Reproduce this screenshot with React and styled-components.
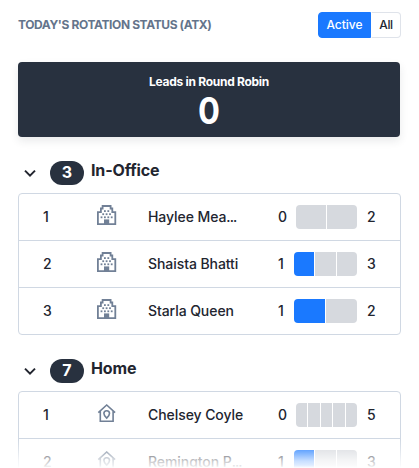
import React from 'react';
import styled, { createGlobalStyle } from 'styled-components';

const Global = createGlobalStyle`
  * { box-sizing: border-box; }
  body { margin: 0; background: #fff; font-family: Inter, sans-serif; color: #22252f; overflow: hidden; }
`;
const Panel = styled.main`
  position: relative;
  height: 468px;
  overflow: hidden;
  padding: 12px 18px 0 18px;
  background: #fff;
`;
const Header = styled.header`
  display: flex;
  justify-content: space-between;
  height: 26px;
  width: 383px;
`;
const Title = styled.h1`
  margin: 0;
  font-size: 12px;
  line-height: 26px;
  font-weight: 700;
  letter-spacing: -0.39px;
  color: #64748b;
  white-space: nowrap;
`;
const Toggle = styled.div`
  display: flex;
  width: 83px;
`;
const ToggleButton = styled.button`
  flex: none;
  width: ${(p) => (p.$active ? 53 : 30)}px;
  height: 26px;
  padding: 0;
  font: 500 12px/24px Inter, sans-serif;
  letter-spacing: ${(p) => (p.$active ? 0 : -0.3)}px;
  color: ${(p) => (p.$active ? '#fff' : '#22252f')};
  background: ${(p) => (p.$active ? '#1a79ff' : '#fff')};
  border: 1px solid ${(p) => (p.$active ? '#1a79ff' : '#dfe3ea')};
  border-left-color: ${(p) => (p.$active ? '#1a79ff' : '#fff')};
  border-radius: ${(p) => (p.$active ? '4px 0 0 4px' : '0 4px 4px 0')};
`;
const Summary = styled.section`
  width: 382px;
  height: 75px;
  margin-top: 24px;
  padding-top: 12px;
  border-radius: 4px;
  background: #28313f;
  color: #fff;
  text-align: center;
  box-shadow: 0 4px 9px rgba(40, 49, 63, 0.1);
`;
const SummaryLabel = styled.div`
  font-size: 12px;
  line-height: 16px;
  font-weight: 700;
  letter-spacing: -0.28px;
`;
const SummaryValue = styled.div`
  font-size: 37px;
  line-height: 42px;
  font-weight: 700;
  transform: scaleX(0.88);
`;
const GroupHeader = styled.div`
  display: flex;
  align-items: flex-start;
  height: 56px;
  padding: 24px 0 0 5px;
`;
const Chevron = styled.svg`
  width: 14px;
  height: 14px;
  margin: 5px 13px 0 0;
`;
const Count = styled.span`
  width: 34px;
  height: 24px;
  margin-right: 7px;
  border-radius: 12px;
  background: #28313f;
  color: #fff;
  font-size: 16px;
  line-height: 23px;
  font-weight: 700;
  text-align: center;
`;
const GroupName = styled.h2`
  margin: 0;
  font-size: 16px;
  line-height: 18px;
  font-weight: 650;
  letter-spacing: -0.16px;
`;
const Table = styled.div`
  width: 383px;
  border: 1px solid #d0d8e3;
  border-radius: 4px;
`;
const Row = styled.div`
  display: grid;
  grid-template-columns: 54px 51px 130px 16px 63px 1fr;
  align-items: center;
  height: 47px;
  padding-left: 24px;
  border-bottom: 1px solid #d0d8e3;
  font-size: 14px;
  font-weight: 500;
  letter-spacing: -0.07px;
  white-space: nowrap;

  &:last-child {
    height: 46px;
    border-bottom: 0;
  }
`;
const Cell = styled.span`
  line-height: 10px;
`;
const Dots = styled.span`
  letter-spacing: -0.9px;
`;
const Limit = styled(Cell)`
  padding-left: 10px;
`;
const RowIcon = styled.svg`
  display: block;
  width: 20px;
  height: 20px;
  margin-top: -4px;
`;
const Meter = styled.div`
  display: flex;
  justify-self: end;
  gap: 1.3px;
  width: ${(p) => (p.$narrow ? 61 : 63)}px;
  height: 24px;
  border-radius: 4px;
  overflow: hidden;
`;
const Segment = styled.i`
  flex: 1;
  background: ${(p) => (p.$filled ? '#1a79ff' : '#d6d9de')};
`;
const Fade = styled.div`
  position: absolute;
  inset: auto 0 0 0;
  height: 28px;
  background: linear-gradient(
    rgba(255, 255, 255, 0),
    rgba(255, 255, 255, 0.32) 36%,
    rgba(255, 255, 255, 0.76) 75%,
    rgba(255, 255, 255, 0.86) 90%,
    #fff
  );
`;

const windows = [
  [7.300, 5.200], [10.700, 5.200],
  [5.600, 8.300], [9, 8.300], [12.400, 8.300],
  [3.900, 11.400], [7.300, 11.400], [10.700, 11.400], [14.100, 11.400],
];

const OfficeIcon = () => (
  <RowIcon viewBox="0 0 20 20" fill="#718096">
    <path
      fill="none"
      stroke="#718096"
      strokeWidth="1.8"
      d="M.9 19.100V7.200h3V3.500h1.700V1h8v2.500h1.700v3.700h3v11.900z"
    />
    <path d="M7 14.400h5.200V19H7z" />
    {windows.map(([x, y]) => (
      <rect key={`${x}-${y}`} x={x - 0.3} y={y} width="1.800" height="1.800" />
    ))}
  </RowIcon>
);
const HomeIcon = () => (
  <RowIcon viewBox="0 0 20 20" fill="none" stroke="#718096" strokeWidth="1.6">
    <path d="M1.300 9.600 9.700 2l8.400 7.600M3.300 8.200v10h12.800v-10" />
    <path d="M9.700 15.200c-1.600-1.500-2.800-3.100-2.800-4.600a2.800 2.800 0 0 1 5.600 0c0 1.500-1.200 3.100-2.800 4.600z" />
  </RowIcon>
);

const groups = [
  {
    name: 'In-Office', count: 3, Icon: OfficeIcon,
    people: [
      { name: 'Haylee Mea', cut: true, done: 0, limit: 2 },
      { name: 'Shaista Bhatti', done: 1, limit: 3 },
      { name: 'Starla Queen', done: 1, limit: 2 },
    ],
  },
  {
    name: 'Home', count: 7, Icon: HomeIcon,
    people: [
      { name: 'Chelsey Coyle', done: 0, limit: 5 },
      { name: 'Remington P', cut: true, done: 1, limit: 3 },
    ],
  },
];

function Group({ name, count, Icon, people }) {
  return (
    <section>
      <GroupHeader>
        <Chevron viewBox="0 0 14 14" fill="none" stroke="#22252f" strokeWidth="2">
          <path d="m2 4.600 5 5 5-5" />
        </Chevron>
        <Count>{count}</Count>
        <GroupName>{name}</GroupName>
      </GroupHeader>
      <Table>
        {people.map((person, i) => (
          <Row key={person.name}>
            <Cell>{i + 1}</Cell>
            <Icon />
            <Cell>{person.name}{person.cut && <Dots>...</Dots>}</Cell>
            <Cell>{person.done}</Cell>
            <Meter $narrow={person.done === 0}>
              {Array.from({ length: person.limit }, (_, n) => (
                <Segment key={n} $filled={n < person.done} />
              ))}
            </Meter>
            <Limit>{person.limit}</Limit>
          </Row>
        ))}
      </Table>
    </section>
  );
}

export default function App() {
  return (
    <Panel>
      <Global />
      <Header>
        <Title>TODAY'S ROTATION STATUS (ATX)</Title>
        <Toggle>
          <ToggleButton $active>Active</ToggleButton>
          <ToggleButton>All</ToggleButton>
        </Toggle>
      </Header>
      <Summary>
        <SummaryLabel>Leads in Round Robin</SummaryLabel>
        <SummaryValue>0</SummaryValue>
      </Summary>
      {groups.map((g) => <Group key={g.name} {...g} />)}
      <Fade />
    </Panel>
  );
}
